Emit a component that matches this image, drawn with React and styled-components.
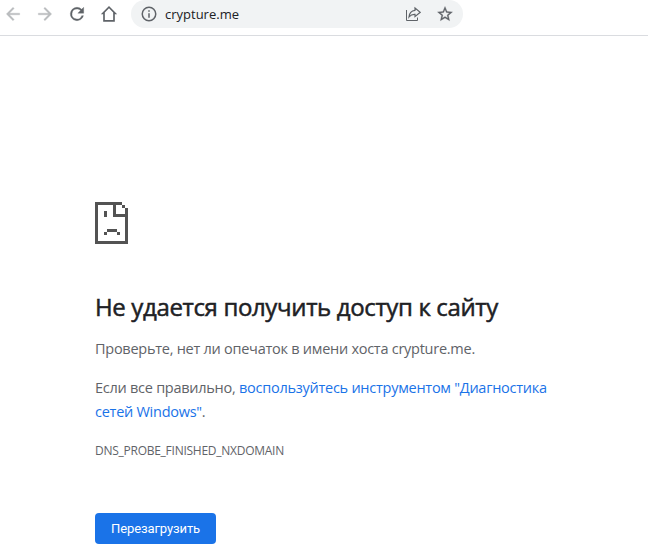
import React from 'react';
import styled, { createGlobalStyle } from 'styled-components';

export default function App() {
  return (
    <>
      <GlobalStyle />
      <Toolbar>
        <Nav>
          <NavButton aria-label="Назад" $disabled>
            <Icon $bold>
              <path d="M20 11H7.83l5.59-5.59L12 4l-8 8 8 8 1.41-1.41L7.83 13H20v-2z" />
            </Icon>
          </NavButton>
          <NavButton aria-label="Вперед" $disabled>
            <Icon $bold>
              <path d="M12 4l-1.41 1.41L16.17 11H4v2h12.17l-5.58 5.59L12 20l8-8z" />
            </Icon>
          </NavButton>
          <NavButton aria-label="Обновить">
            <Icon $bold>
              <path d="M17.65 6.35A7.96 7.96 0 0 0 12 4a8 8 0 1 0 7.73 10h-2.08A6 6 0 1 1 12 6c1.66 0 3.14.69 4.22 1.78L13 11h7V4z" />
            </Icon>
          </NavButton>
          <NavButton aria-label="Главная">
            <Icon>
              <path d="M12 2.5L2.2 12.3H5v8.9h14v-8.9h2.8zM7 19.200v-9l5-5 5 5v9z" />
            </Icon>
          </NavButton>
        </Nav>
        <AddressBar>
          <Icon $size={18}>
            <path d="M11 7h2v2h-2zm0 4h2v6h-2zm1-9a10 10 0 1 0 0 20 10 10 0 0 0 0-20zm0 18a8 8 0 1 1 0-16 8 8 0 0 1 0 16z" />
          </Icon>
          <Url>crypture.me</Url>
          <Actions>
            <svg width="16" height="16" viewBox="0 0 16 16" fill="none" stroke="currentColor">
              <path d="M1.5 4v10.5h11v-3" />
              <path d="M10 2L15.2 6.3 10 10.6V8.3C7.5 8.1 5.6 9 4 11c.3-3.8 2.3-6.3 6-6.7z" strokeWidth="1.2" />
            </svg>
            <Icon $size={18} $bold>
              <path d="M22 9.24l-7.19-.62L12 2 9.19 8.63 2 9.24l5.46 4.73L5.82 21 12 17.27 18.18 21l-1.63-7.03zM12 15.4l-3.76 2.27 1-4.28-3.32-2.88 4.38-.38L12 6.1l1.71 4.04 4.38.38-3.32 2.88 1 4.28z" />
            </Icon>
          </Actions>
        </AddressBar>
      </Toolbar>
      <Main>
        <SadPage />
        <Title>Не удается получить доступ к сайту</Title>
        <Text>Проверьте, нет ли опечаток в имени хоста crypture.me.</Text>
        <Text>
          Если все правильно,{' '}
          <Link>
            воспользуйтесь инструментом "Диагностика
            <br />
            сетей Windows"
          </Link>
          .
        </Text>
        <ErrorCode>DNS_PROBE_FINISHED_NXDOMAIN</ErrorCode>
        <ReloadButton>Перезагрузить</ReloadButton>
      </Main>
    </>
  );
}

const Icon = ({ $size = 20, $bold, children }) => (
  <svg
    width={$size}
    height={$size}
    viewBox="0 0 24 24"
    fill="currentColor"
    stroke={$bold ? 'currentColor' : 'none'}
    strokeWidth="0.4"
  >
    {children}
  </svg>
);

// Drawn on an 11x14 grid, 3px per cell
const SadPage = () => (
  <PageIcon viewBox="0 0 33 42" shapeRendering="crispEdges">
    <path d="M0 0h27v3H3v36h27V15H18V3h3v9h9V6h3v36H0zM27 3h3v3h-3zM9 9h3v6H9zM12 27h10v3H12zM9 30h3v3H9zM22 30h3v3h-3z" />
  </PageIcon>
);

const GlobalStyle = createGlobalStyle`
  * {
    box-sizing: border-box;
  }
  body {
    margin: 0;
    background: #fff;
    font-family: 'Open Sans', 'Noto Sans', sans-serif;
    overflow: hidden;
  }
`;

const Toolbar = styled.header`
  display: flex;
  align-items: flex-start;
  height: 36px;
  padding-left: 3px;
  border-bottom: 1px solid #dadce0;
`;

const Nav = styled.nav`
  display: flex;
  gap: 12px;
  padding-top: 4px;
`;

const NavButton = styled.button`
  display: flex;
  padding: 0;
  border: 0;
  background: none;
  color: ${({ $disabled }) => ($disabled ? '#babcbe' : '#5f6368')};
`;

const AddressBar = styled.div`
  display: flex;
  align-items: center;
  width: 332px;
  height: 28px;
  margin-left: 12px;
  padding: 0 9px;
  border-radius: 14px;
  background: #f1f3f4;
  color: #5f6368;
`;

const Url = styled.span`
  margin-left: 7px;
  font-size: 13px;
  color: #202124;
`;

const Actions = styled.div`
  display: flex;
  align-items: center;
  gap: 15px;
  margin-left: auto;
`;

const Main = styled.main`
  padding: 166px 0 0 95px;
`;

const PageIcon = styled.svg`
  display: block;
  width: 33px;
  height: 42px;
  fill: #535353;
`;

const Title = styled.h1`
  margin: 47px 0 -1px;
  font-size: 24px;
  font-weight: 400;
  line-height: 32px;
  letter-spacing: -0.36px;
  -webkit-text-stroke: 0.5px #202124;
  white-space: nowrap;
  color: #202124;
`;

const Text = styled.p`
  margin: 15px 0 0;
  font-size: 14.5px;
  line-height: 24px;
  letter-spacing: -0.26px;
  white-space: nowrap;
  color: #5f6368;
`;

const Link = styled.a`
  color: #1a73e8;
`;

const ErrorCode = styled.div`
  margin-top: 18px;
  font-size: 12px;
  line-height: 18px;
  letter-spacing: -0.26px;
  color: #5f6368;
`;

const ReloadButton = styled.button`
  width: 121px;
  height: 31px;
  margin-top: 53px;
  padding: 0;
  border: 0;
  border-radius: 4px;
  background: #1a73e8;
  font-family: Roboto, sans-serif;
  font-size: 13px;
  letter-spacing: -0.1px;
  color: #fff;
`;
